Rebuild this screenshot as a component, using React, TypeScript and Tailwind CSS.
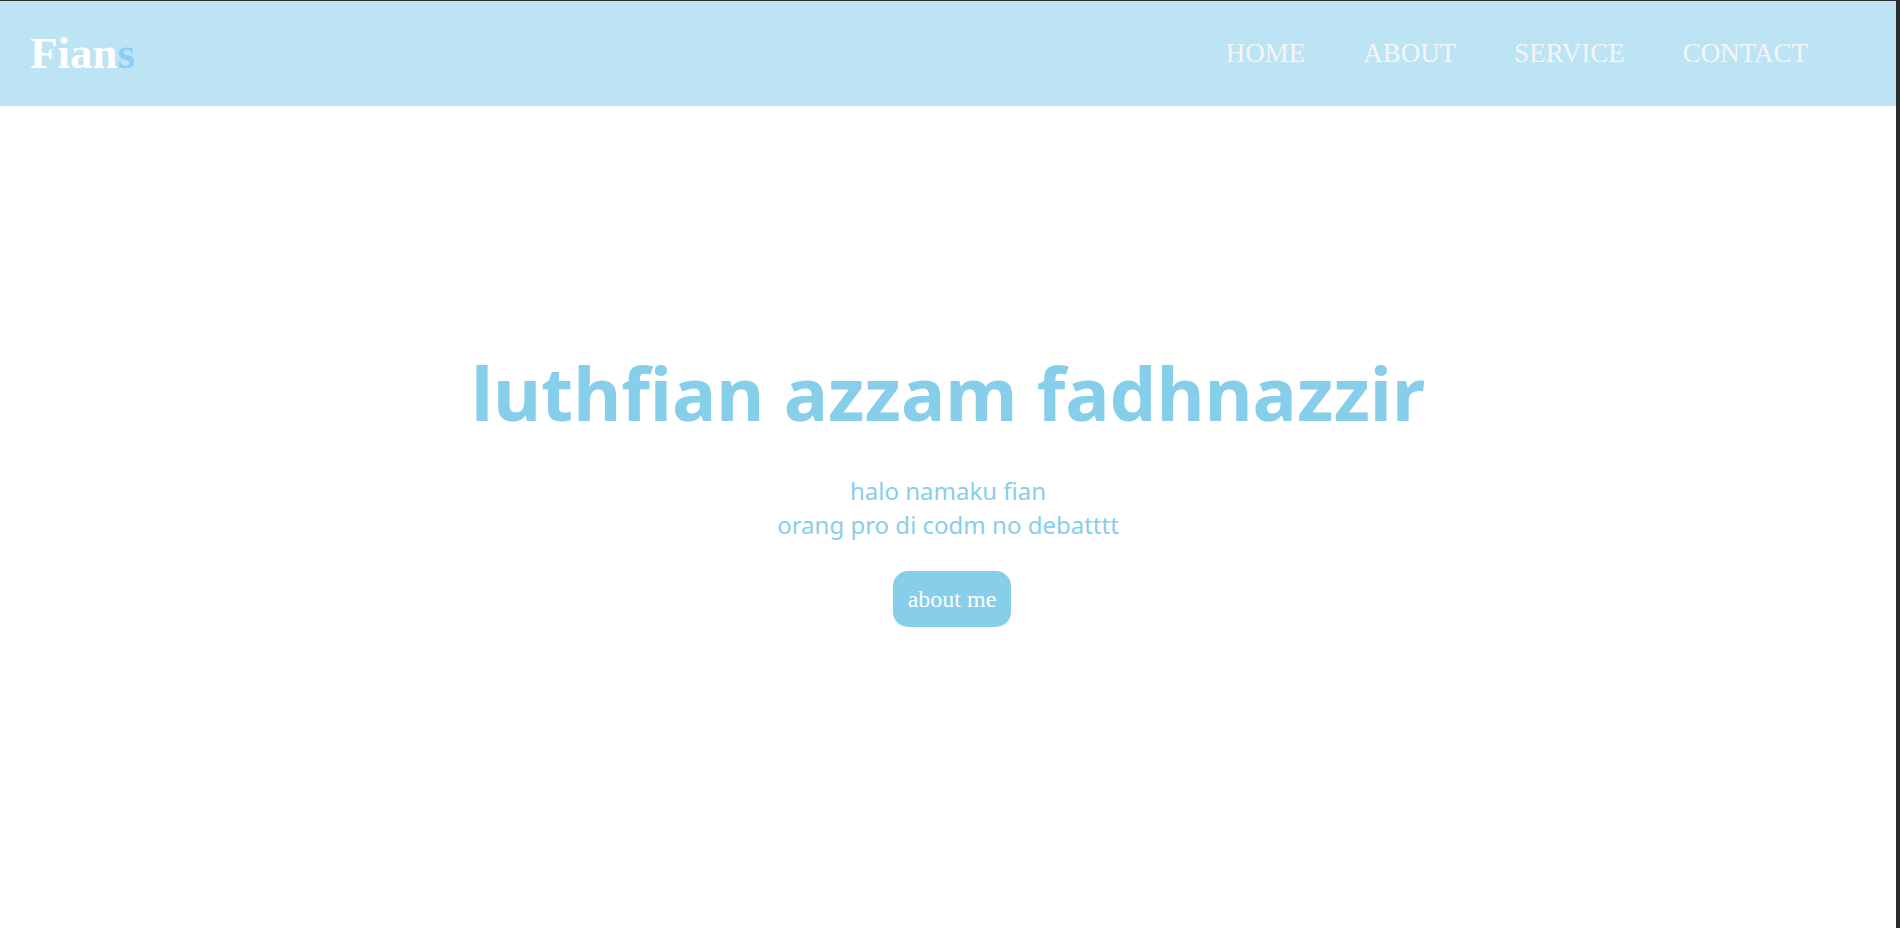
const links = ["HOME", "ABOUT", "SERVICE", "CONTACT"];

const Navbar = () => {
  return (
    <nav className="flex h-[105px] items-center justify-between bg-[#bde4f4] pl-[30px] pr-[88px]">
      <a href="#" className="font-['Liberation_Serif',serif] text-[45px] font-bold leading-none text-white">
        Fian<span className="text-[#87cefa]">s</span>
      </a>
      <ul className="flex gap-[58px]">
        {links.map((link) => (
          <li key={link}>
            <a href="#" className="font-['Liberation_Serif',serif] text-[27px] leading-none text-[#f5f5f5]">
              {link}
            </a>
          </li>
        ))}
      </ul>
    </nav>
  );
};

const Hero = () => {
  return (
    <section className="flex flex-1 flex-col items-center pt-[250px] text-center">
      <h1 className="font-['Comic_Sans_MS','Noto_Sans',sans-serif] text-[74px] font-bold leading-none text-[#87ceeb]">
        luthfian azzam fadhnazzir
      </h1>
      <p className="mt-[44px] font-['Comic_Sans_MS','Noto_Sans',sans-serif] text-[24px] leading-[34px] text-[#87ceeb]">
        halo namaku fian
        <br />
        orang pro di codm no debatttt
      </p>
      <button className="ml-[8px] mt-[29px] rounded-[15px] bg-[#87ceeb] px-[15px] py-[14px] font-['Liberation_Serif',serif] text-[24px] leading-[28px] text-white">
        about me
      </button>
    </section>
  );
}

export default function App() {
  return (
    <div className="flex h-[928px] border-t border-[#2b2b2b] bg-white">
      <div className="flex flex-1 flex-col">
        <Navbar />
        <Hero />
      </div>
      <div className="w-[4px] bg-[#2b2b2b]" />
    </div>
  );
}
